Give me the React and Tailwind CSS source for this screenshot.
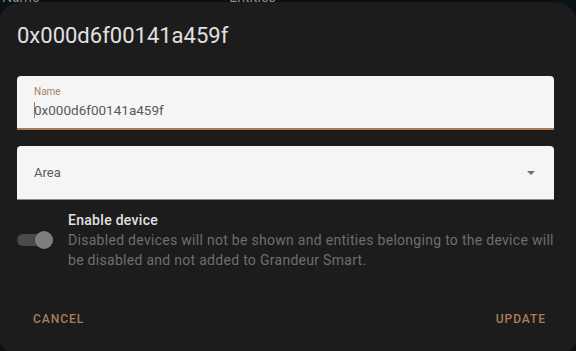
import React from 'react';

const font = { fontFamily: 'Roboto, "Noto Sans", sans-serif' };

function Toggle() {
  return (
    <div className="relative w-[36px] h-[18px] shrink-0 flex items-center">
      <div className="w-[32px] h-[12px] rounded-full bg-[#4a4a4a]" />
      <div className="absolute right-0 top-0 w-[18px] h-[18px] rounded-full bg-[#7e7e7e]" />
    </div>
  );
}

export default function App() {
  return (
    <div className="relative w-[576px] h-[351px] overflow-hidden bg-[#0b1215]" style={font}>
      {/* page behind the dialog, mostly hidden */}
      <div className="flex gap-[190px] px-[2px] -mt-[13px] text-[14px] text-[#8a8a8a]">
        <span>Name</span>
        <span>Entities</span>
      </div>

      <div className="absolute top-[2px] left-[-2px] w-[580px] h-[354px] rounded-[24px] bg-[#1c1c1c] flex flex-col">
        <h2 className="pl-[19px] pt-[20px] text-[22px] leading-[28px] text-[#e1e1e1]">
          0x000d6f00141a459f
        </h2>

        <div className="mt-[26px] ml-[19px] mr-[24px] flex flex-col gap-[16px]">
          {/* Name field */}
          <div className="h-[54px] bg-[#f5f5f5] border-b-2 border-[#a97954] rounded-t-[4px] px-[17px] pt-[10px]">
            <div className="text-[10px] leading-[12px] text-[#a88066]">Name</div>
            <div className="flex items-center mt-[3px] text-[13.5px] leading-[18px] text-[#5a5a5a]">
              <span className="w-px h-[16px] bg-[#a97954] -mr-px" />
              <span>0x000d6f00141a459f</span>
            </div>
          </div>

          {/* Area select */}
          <div className="h-[54px] bg-[#f5f5f5] border-b border-[#8a8a8a] rounded-t-[4px] pl-[17px] pr-[19px] flex items-center justify-between">
            <span className="text-[13px] text-[#5c5c5c]">Area</span>
            <svg width="8" height="4" viewBox="0 0 8 4">
              <path d="M0 0 L8 0 L4 4 Z" fill="#6e6e6e" />
            </svg>
          </div>
        </div>

        {/* Enable device */}
        <div className="mt-[10px] pl-[19px] pr-[24px] flex items-center gap-[15px]">
          <Toggle />
          <div className="flex flex-col tracking-[0.018em]">
            <span className="text-[14px] leading-[20px] font-medium text-[#e1e1e1]">Enable device</span>
            <p className="text-[14px] leading-[20px] text-[#6e6e6e]">
              Disabled devices will not be shown and entities belonging to the device will be disabled and not added to Grandeur Smart.
            </p>
          </div>
        </div>

        <div className="mt-auto mb-[30px] pl-[35px] pr-[32px] flex justify-between text-[12px] leading-[14px] font-medium tracking-[0.08em] text-[#ab7d5b]">
          <button>CANCEL</button>
          <button>UPDATE</button>
        </div>
      </div>
    </div>
  );
}
